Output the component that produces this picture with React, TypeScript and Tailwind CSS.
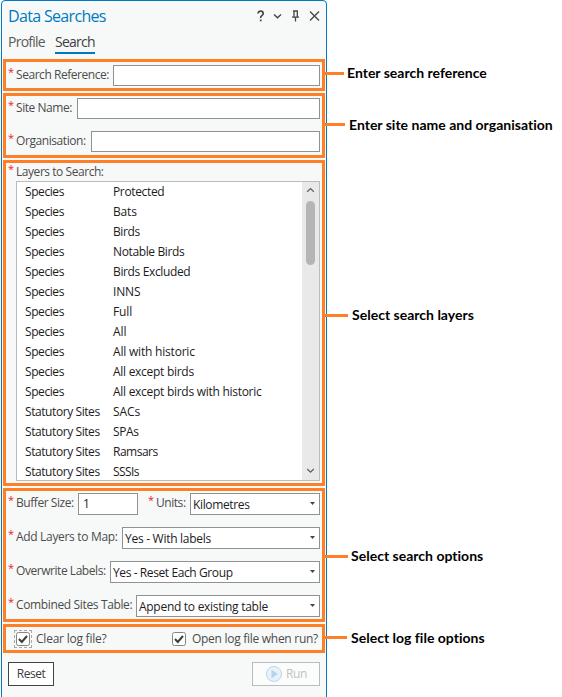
import type { ReactNode } from 'react';

const layers: [string, string, string][] = [
  ['Species', 'Protected', 'tracking-[-0.35px]'],
  ['Species', 'Bats', 'tracking-[-0.15px]'],
  ['Species', 'Birds', 'tracking-[-0.4px]'],
  ['Species', 'Notable Birds', 'tracking-[-0.38px]'],
  ['Species', 'Birds Excluded', 'tracking-[-0.36px]'],
  ['Species', 'INNS', 'tracking-[-0.15px]'],
  ['Species', 'Full', 'tracking-[-0.15px]'],
  ['Species', 'All', 'tracking-[0px]'],
  ['Species', 'All with historic', 'tracking-[-0.2px]'],
  ['Species', 'All except birds', 'tracking-[-0.28px]'],
  ['Species', 'All except birds with historic', 'tracking-[-0.28px]'],
  ['Statutory Sites', 'SACs', 'tracking-[-0.1px]'],
  ['Statutory Sites', 'SPAs', 'tracking-[-0.4px]'],
  ['Statutory Sites', 'Ramsars', 'tracking-[-0.5px]'],
  ['Statutory Sites', 'SSSIs', 'tracking-[-0.6px]'],
];

function Section({ className, children, line, note }: { className: string; children: ReactNode; line: string; note: ReactNode }) {
  return (
    <section className={`relative ml-px w-[322px] shrink-0 border-[3px] border-[#ff7f27] ${className}`}>
      {children}
      <div className={`absolute left-[318px] flex h-[3px] items-center ${line}`}>
        {note}
      </div>
    </section>
  );
}

function Note({ bar, text, shift = '-mt-px' }: { bar: string; text: string; shift?: string }) {
  return (
    <>
      <span className={`h-[3px] shrink-0 bg-[#ff7f27] ${bar}`} />
      <span className={`whitespace-nowrap font-['Lato'] text-[14px] font-bold leading-5 tracking-[0.01px] text-black [font-variant-ligatures:none] ${shift}`}>{text}</span>
    </>
  );
}

function Label({ children, width, tracking = 'tracking-[-0.45px]' }: { children: string; width: string; tracking?: string }) {
  return (
    <div className={`flex h-5 shrink-0 items-center whitespace-nowrap text-[#4c4c4c] ${width}`}>
      <span className="h-5 w-2 shrink-0 text-[11px] leading-[13px] text-[#f01818]">*</span>
      <span className={tracking}>{children}</span>
    </div>
  );
}

function Input({ className = 'h-[21px] flex-1', children }: { className?: string; children?: ReactNode }) {
  return <div className={`border border-[#8f9192] bg-white ${className}`}>{children}</div>;
}

function Select({ value, tracking }: { value: string; tracking: string }) {
  return (
    <div className="flex h-[22px] flex-1 items-center justify-between border border-[#8f9192] bg-white pl-[2px] pr-[4px] text-[#1c1c1c]">
      <span className={`whitespace-nowrap pt-px ${tracking}`}>{value}</span>
      <svg width="5" height="3" viewBox="0 0 5 3" className="-mt-px">
        <path d="M0 0h5L2.5 3z" fill="#444" />
      </svg>
    </div>
  );
}

function Check() {
  return (
    <svg width="14" height="14" viewBox="0 0 14 14" className="shrink-0">
      <rect x=".5" y=".5" width="13" height="13" rx="2" fill="#fff" stroke="#858585" />
      <path d="M3 7l2.8 3L11 4" fill="none" stroke="#3c3c3c" strokeWidth="2" />
    </svg>
  );
}

export default function App() {
  return (
    <div className="h-[697px] w-[562px] overflow-hidden bg-white pl-px font-['Open_Sans','Noto_Sans',sans-serif] text-[12px] leading-4">
      <div className="flex h-[705px] w-[326px] flex-col rounded-t border border-[#0079c1] bg-[#f7f9f8]">
        <header className="flex h-[30px] shrink-0 items-center justify-between pl-[6px] pr-[6px] text-[#0079c1]">
          <h1 className="whitespace-nowrap text-[16px] leading-6 tracking-[-0.67px]">Data Searches</h1>
          <svg width="64" height="14" viewBox="0 0 64 14" fill="none" stroke="#444" strokeWidth="1.4">
            <path d="M2.2 4.6V3.8Q2.6 2.2 4.8 2.2T7.2 4.4Q7.2 5.6 5.8 6.6T4.7 9M4.7 10.4v1.8" strokeWidth="1.7" />
            <path d="M18 5.5l3.5 3.3L25 5.5" />
            <path d="M37 2h5M38 2v6M41.3 2v6M36 8.2h7M39.5 8v4.5" strokeWidth="1.3" />
            <path d="M54 2.5l9 9M63 2.5l-9 9" strokeWidth="1.3" />
          </svg>
        </header>
        <nav className="flex h-[28px] shrink-0 gap-[9px] pl-[6px] text-[14px] leading-[21px] text-[#5a5a5a]">
          <span className="h-[23px] w-[38px] whitespace-nowrap tracking-[-0.75px]">Profile</span>
          <span className="h-[23px] w-10 whitespace-nowrap border-b-2 border-[#0079c1] tracking-[-0.75px] text-[#3f3f3f]">Search</span>
        </nav>

        <Section className="h-8 pl-[2px] pr-[2px] pt-[3px]" line="top-[10px]" note={<div className="flex items-center gap-[3px]"><Note bar="w-5" text="Enter search reference" /></div>}>
          <div className="flex">
            <Label width="w-[105px]">Search Reference:</Label>
            <Input />
          </div>
        </Section>

        <Section className="mt-[2px] h-[65px] pl-[2px] pr-[2px] pt-[2px]" line="top-[27px]" note={<div className="flex items-center gap-1"><Note bar="w-[21px]" text="Enter site name and organisation" shift="mt-px" /></div>}>
          <div className="flex">
            <Label width="w-[69px]">Site Name:</Label>
            <Input />
          </div>
          <div className="mt-3 flex">
            <Label width="w-[83px]" tracking="tracking-[-0.42px]">Organisation:</Label>
            <Input />
          </div>
        </Section>

        <Section className="mt-[2px] h-[326px] pl-[2px] pr-[2px]" line="top-[151px]" note={<div className="flex items-center gap-1"><Note bar="w-6" text="Select search layers" /></div>}>
          <div className="-mt-px mb-px h-[18px]">
            <Label width="w-[200px]">Layers to Search:</Label>
          </div>
          <div className="ml-2 flex h-[300px] border border-[#b9bcc1] bg-white text-[#1c1c1c]">
            <div className="flex-1">
              {layers.map(([group, name, tracking]) => (
                <div key={name} className="flex h-5 items-center whitespace-nowrap pl-2">
                  <span className="w-[88px] tracking-[-0.42px]">{group}</span>
                  <span className={tracking}>{name}</span>
                </div>
              ))}
            </div>
            <div className="flex w-[17px] flex-col items-center bg-[#e9e9e9]">
              <svg width="9" height="19" viewBox="0 0 9 19" fill="none" stroke="#606060" strokeWidth="1.3">
                <path d="M1.2 9.8L4.5 6.6 7.8 9.8" />
              </svg>
              <div className="h-16 w-[9px] rounded-full bg-[#b5b5b5]" />
              <svg width="9" height="19" viewBox="0 0 9 19" fill="none" stroke="#606060" strokeWidth="1.3" className="mt-auto">
                <path d="M1.2 8L4.5 11.2 7.8 8" />
              </svg>
            </div>
          </div>
        </Section>

        <Section className="mt-[2px] h-[134px] pl-[2px] pr-[2px] pt-[2px]" line="top-[64px]" note={<div className="flex items-center gap-[3px]"><Note bar="w-6" text="Select search options" /></div>}>
          <div className="flex">
            <Label width="w-[70px]">Buffer Size:</Label>
            <Input className="h-[22px] w-[60px] pl-1 pt-[2px] text-[#1c1c1c]">1</Input>
            <div className="w-[10px]" />
            <Label width="w-[42px]">Units:</Label>
            <Select value="Kilometres" tracking="tracking-[-0.35px]" />
          </div>
          <div className="mt-3 flex">
            <Label width="w-[114px]" tracking="tracking-[-0.32px]">Add Layers to Map:</Label>
            <Select value="Yes - With labels" tracking="tracking-[-0.28px]" />
          </div>
          <div className="mt-3 flex">
            <Label width="w-[102px]">Overwrite Labels:</Label>
            <Select value="Yes - Reset Each Group" tracking="tracking-[-0.4px]" />
          </div>
          <div className="mt-3 flex">
            <Label width="w-[128px]" tracking="tracking-[-0.36px]">Combined Sites Table:</Label>
            <Select value="Append to existing table" tracking="tracking-[-0.28px]" />
          </div>
        </Section>

        <Section className="mt-[2px] flex h-[29px] items-center pl-2 text-[#4c4c4c]" line="top-[9px]" note={<div className="flex items-center gap-1"><Note bar="w-[23px]" text="Select log file options" shift="mt-px" /></div>}>
          <div className="flex h-[18px] w-[18px] items-center justify-center border border-dashed border-[#aaa]">
            <Check />
          </div>
          <span className="ml-1 w-[136px] whitespace-nowrap tracking-[-0.23px]">Clear log file?</span>
          <Check />
          <span className="ml-[6px] whitespace-nowrap tracking-[-0.28px]">Open log file when run?</span>
        </Section>

        <footer className="mt-[9px] flex justify-between pl-[6px] pr-[6px]">
          <button className="h-6 w-[46px] border border-[#444] bg-white leading-[22px] tracking-[-0.45px] text-[#3c3c3c]">Reset</button>
          <button className="flex h-6 w-[68px] items-center gap-1 border border-[#b9bbbc] bg-[#fbfcfc] pl-[13px] tracking-[-0.4px] text-[#bfc1c2]">
            <svg width="16" height="16" viewBox="0 0 16 16">
              <circle cx="8" cy="8" r="7.5" fill="#e8f2fa" stroke="#bcd5e5" />
              <path d="M5.5 3.8v8.4L12 8z" fill="#b3d6ee" />
            </svg>
            Run
          </button>
        </footer>
      </div>
    </div>
  );
}
